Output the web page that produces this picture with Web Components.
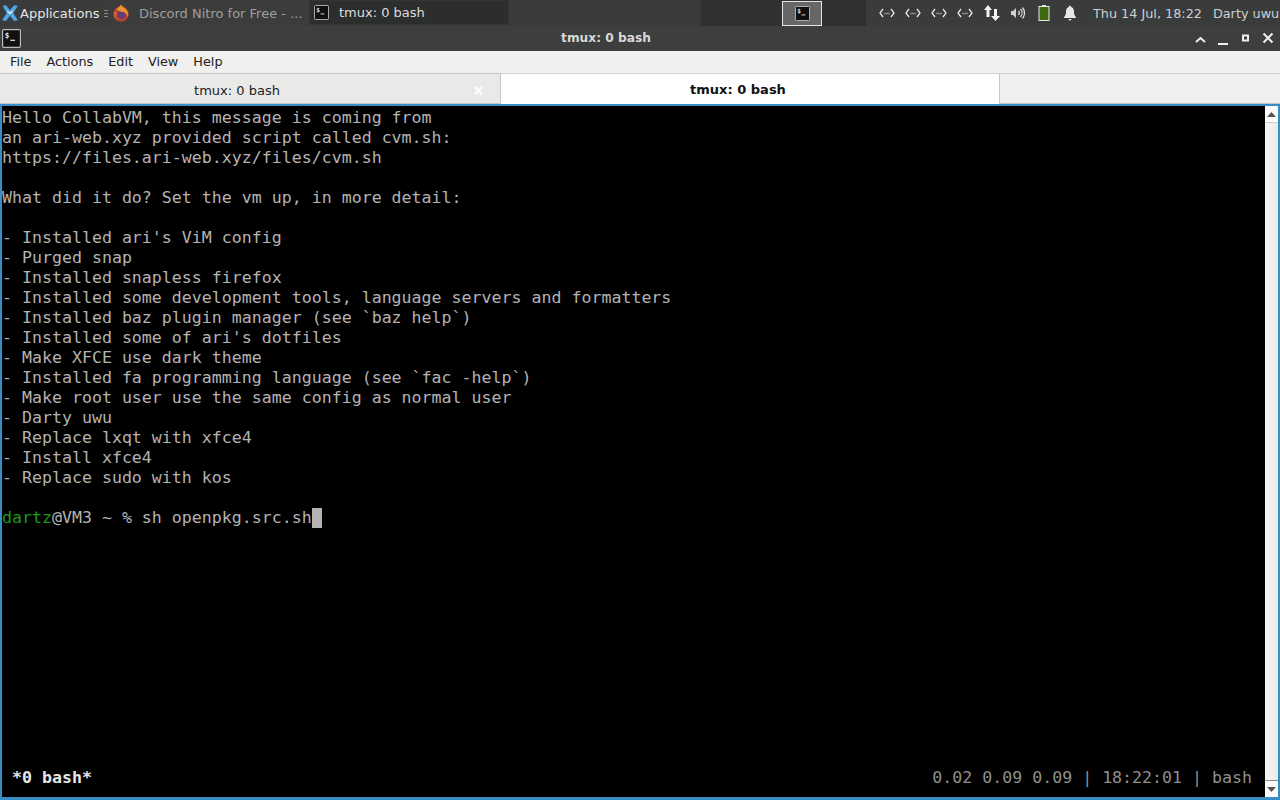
<!DOCTYPE html>
<html><head><meta charset="utf-8">
<style>
html,body{margin:0;padding:0;width:1280px;height:800px;overflow:hidden;background:#3a3c3c}
body{font-family:"DejaVu Sans",sans-serif}
</style></head>
<body>
<x-desktop>
  <x-panel></x-panel>
  <x-window title-text="tmux: 0 bash"></x-window>
</x-desktop>
<script>
const TERM_ICON=(s)=>`<svg width="${s}" height="${s}" viewBox="0 0 16 16"><rect x=".5" y=".5" width="15" height="15" rx="1" fill="#111" stroke="#b9bbbb"/><text x="2.4" y="7.6" font-family="DejaVu Sans Mono" font-size="6.5" font-weight="bold" fill="#e8e8e8">$</text><path d="M7 9.5h4" stroke="#e8e8e8" stroke-width="1"/></svg>`;
const NET=`<svg width="16" height="10" viewBox="0 0 16 10" fill="none" stroke="#e6e6e6" stroke-width="1.3"><path d="M4 1 1 5l3 4M12 1l3 4-3 4"/><path d="M5.5 5.5h5" stroke-dasharray="1 1" stroke="#cfcfcf"/></svg>`;
function def(name,css,html,init){
  customElements.define(name,class extends HTMLElement{
    constructor(){super();const r=this.attachShadow({mode:'open'});r.innerHTML=`<style>${css}</style>${typeof html==='function'?html(this):html}`;}
    connectedCallback(){if(init)init(this)}
  });
}
def('x-desktop',`:host{display:flex;flex-direction:column;width:1280px;height:800px}`,`<slot></slot>`);

def('x-panel-task',`:host{display:flex;align-items:center;box-sizing:border-box;height:26px;font-size:13px;color:#9d9f9f;white-space:nowrap;overflow:hidden}
:host([active]){background:#2c2e2e;color:#dcdcdc;box-shadow:inset 0 0 0 1px #343636;}
.i{width:16px;height:16px;display:flex;flex:none}
span{display:block}`,
el=>`<div class="i"><slot name="icon"></slot></div><span style="margin-left:${el.getAttribute('gap')||16}px"><slot></slot></span>`);

def('x-panel',`:host{display:flex;align-items:stretch;height:26px;flex:none;background:#3a3c3c;color:#dcdcdc;font-size:13px;white-space:nowrap}
.apps{display:flex;align-items:center;width:104px;flex:none;padding-left:1px;box-sizing:border-box;color:#e4e4e4}
.apps svg{flex:none;margin-right:1px}
.grip{width:5px;flex:none;display:flex;flex-direction:column;justify-content:center;gap:2px}
.grip i{display:block;width:4px;height:1px;background:#8b8d8d}
x-panel-task.t1{width:200px;padding-left:4px;background:#3c3c3c}
x-panel-task.t2{width:200px;padding-left:5px;margin-bottom:1px;height:25px}
.gap{flex:1;background:#3a3c3c}
.pager{width:165px;flex:none;background:#2f3131;display:flex;align-items:center;padding-left:81px;box-sizing:border-box}
.ws{width:40px;height:25px;box-sizing:border-box;border:1px solid #e2e2e2;background:#666868;display:flex;align-items:center;justify-content:center}
.tray{width:414px;flex:none;display:flex;align-items:center;box-sizing:border-box;padding-left:13px}
.tray .n{display:flex;margin-right:10px}
.clock{margin-left:16px;color:#cfcfcf;font-size:12.8px}
.user{margin-left:11px;color:#cfcfcf;font-size:12.8px}`,
`<div class="apps"><svg width="18" height="18" viewBox="0 0 18 18"><path d="M2 2 5 1.500 9 6.500 13 1.500l3.500.5L12 9l4.500 7-3.500.8L9 11.500 5 16.800 1.500 16 6 9z" fill="#55a7e2" stroke="#3d8ecb" stroke-width=".8" stroke-linejoin="round"/><path d="M6.500 7 9 9.500 11.500 7" stroke="#d8edfb" stroke-width="1.500" fill="none"/></svg><span>Applications</span></div>
<div class="grip"><i></i><i></i><i></i></div>
<x-panel-task class="t1" gap="10"><svg slot="icon" width="18" height="18" viewBox="0 0 18 18" style="margin:-1px 0 0 -1px;flex:none"><circle cx="9" cy="10" r="7.800" fill="#b0442f"/><circle cx="9.500" cy="10.500" r="4.200" fill="#6a3a7a"/><path d="M4 5C6 5 7 3 9 .6c.5 2 3 2.900 5 4.900 2 2 2.700 5 1.700 7.500-.5-2.500-2.200-4.500-4.200-5C9 7.500 6.500 7.500 4 5z" fill="#e9962e"/><path d="M2.500 7.500c-1 3.500 0 6 2 8C3.500 13 4 10 5.500 8.500z" fill="#d9672a"/></svg>Discord Nitro for Free - ...</x-panel-task>
<x-panel-task class="t2" active gap="9"><span slot="icon" style="display:flex">${TERM_ICON(15)}</span>tmux: 0 bash</x-panel-task>
<div class="gap"></div>
<div class="pager"><div class="ws">${TERM_ICON(15)}</div></div>
<div class="tray">
 <span class="n">${NET}</span><span class="n">${NET}</span><span class="n">${NET}</span><span class="n" style="margin-right:10px">${NET}</span>
 <svg width="18" height="18" viewBox="0 0 18 18" style="margin-right:9px;flex:none"><path d="M5 1 1 6h2.500v7h3V6H9z" fill="#f2f2f2"/><path d="M12.500 17 17 12h-3V5h-3v7H8z" fill="#f2f2f2"/></svg>
 <svg width="16" height="16" viewBox="0 0 16 16" fill="none" style="margin-right:12px;flex:none"><path d="M1 6h2l3-3v10l-3-3H1z" fill="#cfcfcf"/><path d="M8.500 6a3 3 0 0 1 0 4M10.500 4a6 6 0 0 1 0 8M12.500 2.500a8.500 8.500 0 0 1 0 11" stroke="#e4e4e4" stroke-width="1.200"/></svg>
 <svg width="12" height="18" viewBox="0 0 12 18" style="margin-right:13px;flex:none"><rect x="4" y="1" width="4" height="2" fill="#e6e6e6"/><rect x="1" y="2.500" width="10" height="14" fill="#3f6a10" stroke="#e6e6e6"/></svg>
 <svg width="14" height="16" viewBox="0 0 14 16" style="flex:none"><path d="M7 .8c.8 0 1.200.5 1.200 1.200C10.500 2.700 11 5 11 7c0 3 1 4 2 5.200v.8H1v-.8C2 11 3 10 3 7c0-2 .5-4.300 2.800-5C5.800 1.300 6.200.8 7 .8z" fill="#e8e8e8"/><path d="M5.500 14h3a1.500 1.500 0 0 1-3 0z" fill="#e8e8e8"/></svg>
 <span class="clock">Thu 14 Jul, 18:22</span><span class="user">Darty uwu</span>
</div>`);

def('x-titlebar',`:host{display:flex;align-items:center;height:25px;flex:none;background:#3d3f3f;color:#dedede;position:relative}
.ic{width:20px;display:flex;padding-left:2px;margin-top:-1px}
.t{position:absolute;left:0;width:1212px;text-align:center;font-weight:bold;font-size:12.2px;line-height:24px;top:0;color:#d8d8d8}
.btns{margin-left:auto;display:flex;padding-right:0}
.btns svg{display:block;width:23px;height:24px}`,
el=>`<div class="ic">${TERM_ICON(19)}</div><div class="t">${el.getAttribute('title-text')}</div>
<div class="btns">
<svg viewBox="0 0 23 24" fill="none" stroke="#efefef" stroke-width="2"><path d="M8 15l4.500-4 4.500 4"/></svg>
<svg viewBox="0 0 23 24" fill="none" stroke="#efefef" stroke-width="2"><path d="M7 17h10"/></svg>
<svg viewBox="0 0 23 24" fill="none" stroke="#efefef" stroke-width="2"><rect x="9" y="8.500" width="5" height="5"/></svg>
<svg viewBox="0 0 23 24" fill="none" stroke="#efefef" stroke-width="2"><path d="M6.500 6.500l9 9M15.500 6.500l-9 9"/></svg>
</div>`);

def('x-menubar',`:host{display:flex;align-items:center;height:22px;flex:none;background:#f0f0ee;color:#222;font-size:12.8px;padding-left:10px;gap:15px;box-sizing:border-box}`,
`<slot></slot>`);
def('x-menu-item',`:host{display:block;line-height:22px}`,`<slot></slot>`);

def('x-tab',`:host{display:flex;align-items:center;justify-content:center;position:relative;box-sizing:border-box;height:31px;width:501px;font-size:13px;color:#222;background:#e9e9e7;border:1px solid #c6c6c4;border-left:0;padding:3px 26px 0 0}
:host([active]){background:#fff;font-weight:bold;color:#111;width:499px;padding:1px 24px 0 0;border-bottom:0;border-top-color:#cfcfcd}
.x{position:absolute;right:17px;top:12px;width:9px;height:9px}`,
el=>`<slot></slot>${el.hasAttribute('active')?'':'<svg class="x" viewBox="0 0 9 9" stroke="#fff" stroke-width="2"><path d="M1 1l7 7M8 1l-7 7"/></svg>'}`);
def('x-tabbar',`:host{display:flex;height:31px;flex:none;background:#f0f0ee;box-sizing:border-box}
.rest{flex:1;border-bottom:1px solid #c6c6c4;border-top:1px solid #d0d0ce}`,`<slot></slot><div class="rest"></div>`);

def('x-scrollbar',`:host{display:flex;flex-direction:column;width:13px;flex:none;background:#efefed;box-sizing:border-box}
.b{height:16px;background:#fbfbfb;display:flex;align-items:center;justify-content:center;flex:none}
.up{border-bottom:1px solid #cfcfcf}.dn{border-top:1px solid #8d8d8d}
.th{flex:1;background:linear-gradient(90deg,#f7f7f7,#e9e9e7)}`,
`<div class="b up"><svg width="9" height="5" viewBox="0 0 9 5"><path d="M0 5 4.500 0 9 5z" fill="#555"/></svg></div><div class="th"></div><div class="b dn"><svg width="9" height="5" viewBox="0 0 9 5"><path d="M0 0 4.500 5 9 0z" fill="#555"/></svg></div>`);

def('x-terminal',`:host{display:flex;flex:1;min-height:0;background:#000;border:solid #3a8dc4;border-width:2px 2px 3px 2px;box-sizing:border-box}
.main{flex:1;display:flex;flex-direction:column;min-width:0;background:#000;color:#b3b3b3;font-family:"DejaVu Sans Mono",monospace;font-size:16.6px;line-height:20px;padding-top:2px}
pre{margin:0;font:inherit;flex:1;overflow:hidden}
.g{color:#1d9a1d}
.cur{display:inline-block;width:10px;height:20px;background:#b3b3b3;vertical-align:top}
.status{display:flex;justify-content:space-between;height:20px;flex:none;margin-bottom:9px;padding:0 13px 0 10px;white-space:pre}
.status b{color:#e6e6e6;font-weight:bold}
.status span{color:#8f8f8f}`,
`<div class="main"><pre>Hello CollabVM, this message is coming from
an ari-web.xyz provided script called cvm.sh:
https://files.ari-web.xyz/files/cvm.sh

What did it do? Set the vm up, in more detail:

- Installed ari's ViM config
- Purged snap
- Installed snapless firefox
- Installed some development tools, language servers and formatters
- Installed baz plugin manager (see \`baz help\`)
- Installed some of ari's dotfiles
- Make XFCE use dark theme
- Installed fa programming language (see \`fac -help\`)
- Make root user use the same config as normal user
- Darty uwu
- Replace lxqt with xfce4
- Install xfce4
- Replace sudo with kos

<span class="g">dartz</span>@VM3 ~ % sh openpkg.src.sh<span class="cur"></span></pre>
<div class="status"><b>*0 bash*</b><span>0.02 0.09 0.09 | 18:22:01 | bash</span></div></div><x-scrollbar></x-scrollbar>`);

def('x-window',`:host{display:flex;flex-direction:column;flex:1;min-height:0}`,
el=>`<x-titlebar title-text="${el.getAttribute('title-text')}"></x-titlebar>
<x-menubar><x-menu-item>File</x-menu-item><x-menu-item>Actions</x-menu-item><x-menu-item>Edit</x-menu-item><x-menu-item>View</x-menu-item><x-menu-item>Help</x-menu-item></x-menubar>
<x-tabbar><x-tab>tmux: 0 bash</x-tab><x-tab active>tmux: 0 bash</x-tab></x-tabbar>
<x-terminal></x-terminal>`);
</script>
</body></html>
